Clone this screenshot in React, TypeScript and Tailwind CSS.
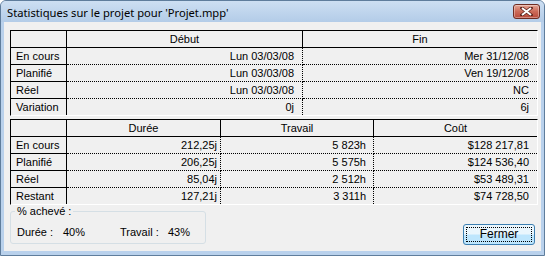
import React from 'react';
import clsx from 'clsx';

const font = "font-['Liberation_Sans',Tahoma,sans-serif] text-[11px] leading-[13px] text-black";

type TableProps = {
	cols: string;
	headers: string[];
	rows: string[][];
	pads: string[];
};

const StatTable = ({cols, headers, rows, pads}: TableProps) => {
	const last = headers.length - 1;
	return (
		<div className={clsx('grid w-[528px] border border-t-black border-l-black border-r-white border-b-white', cols)}>
			{headers.map((h, i) => (
				<div key={'h' + i}
				     className={clsx('h-[17px] flex items-center justify-center border-b border-black', i !== last && 'border-r')}>
					{h}
				</div>
			))}
			{rows.map((row, r) => {
				const isLast = r === rows.length - 1;
				return row.map((val, c) => (
					c === 0 ? (
						<div key={r + '-' + c}
						     className={clsx('flex items-center pl-[5px] border-r border-black', isLast ? 'h-[16px]' : 'h-[17px] border-b')}>
							{val}
						</div>
					) : (
						<div key={r + '-' + c}
						     className={clsx('flex items-center justify-end border-dotted border-black', pads[c],
							     isLast ? 'h-[16px]' : 'h-[17px] border-b', c !== last && 'border-r')}>
							{val}
						</div>
					)
				));
			})}
		</div>
	);
};

const CloseButton = () => (
	<div className="w-[27px] h-[15px] rounded-[3px] border border-[#6e2c22] bg-gradient-to-b from-[#e3a595] via-[#cc6a58] to-[#b8493a] flex items-center justify-center shadow-[inset_0_0_0_1px_rgba(255,255,255,0.35)]">
		<svg width="13" height="9" viewBox="0 0 13 9">
			<path d="M2 1 L11 8 M11 1 L2 8" stroke="#5a2119" strokeWidth="3.4" strokeLinecap="square"/>
			<path d="M2 1 L11 8 M11 1 L2 8" stroke="#ffffff" strokeWidth="2"/>
		</svg>
	</div>
);

const App = () => {

	const plan = [
		['En cours', 'Lun 03/03/08', 'Mer 31/12/08'],
		['Planifié', 'Lun 03/03/08', 'Ven 19/12/08'],
		['Réel', 'Lun 03/03/08', 'NC'],
		['Variation', '0j', '6j'],
	];

	const totals = [
		['En cours', '212,25j', '5 823h', '$128 217,81'],
		['Planifié', '206,25j', '5 575h', '$124 536,40'],
		['Réel', '85,04j', '2 512h', '$53 489,31'],
		['Restant', '127,21j', '3 311h', '$74 728,50'],
	];

	return (
		<div className={clsx('w-[545px] h-[256px]', font)}>
			<div className="flex flex-col h-full border border-[#5f7d9c] rounded-t-[6px] bg-[#b9d1ec]">
				{/* barre de titre */}
				<div className="h-[21px] flex items-center justify-between pl-[6px] pr-[4px] rounded-t-[5px] bg-gradient-to-b from-[#cddff2] to-[#b3cce8]">
					<span className="pt-[2px] font-['Noto_Sans',sans-serif] text-[11.2px] leading-[15px]">
						Statistiques sur le projet pour 'Projet.mpp'
					</span>
					<CloseButton/>
				</div>
				<div className="flex-1 mx-[3px] mb-[4px] bg-[#f0f0f0] pt-[8px] pl-[6px] pr-[3px] flex flex-col">
					<StatTable cols="grid-cols-[56px_236px_234px]"
					           headers={['', 'Début', 'Fin']}
					           rows={plan}
					           pads={['', 'pr-[8px]', 'pr-[8px]']}/>
					<div className="mt-[3px]">
						<StatTable cols="grid-cols-[56px_154px_153px_163px]"
						           headers={['', 'Durée', 'Travail', 'Coût']}
						           rows={totals}
						           pads={['', 'pr-[3px]', 'pr-[7px]', 'pr-[8px]']}/>
					</div>
					<div className="flex justify-between items-start">
						<fieldset className="w-[196px] h-[39px] border border-[#d5dfe5] rounded-[3px]">
							<legend className="ml-[4px] px-[2px]">% achevé :</legend>
							<div className="flex pl-[6px] pt-[8px]">
								<span className="w-[46px]">Durée :</span>
								<span className="w-[57px]">40%</span>
								<span className="w-[48px]">Travail :</span>
								<span>43%</span>
							</div>
						</fieldset>
						<button className="mt-[19px] mr-[3px] w-[72px] h-[21px] rounded-[3px] border border-[#3c7fb1] bg-gradient-to-b from-[#eaf6fd] from-45% to-[#bee6fd] to-55% p-[2px]">
							<div className="w-full h-full border border-dotted border-black flex items-center justify-center text-[12px]">
								Fermer
							</div>
						</button>
					</div>
				</div>
			</div>
		</div>
	);
};

export default App;
